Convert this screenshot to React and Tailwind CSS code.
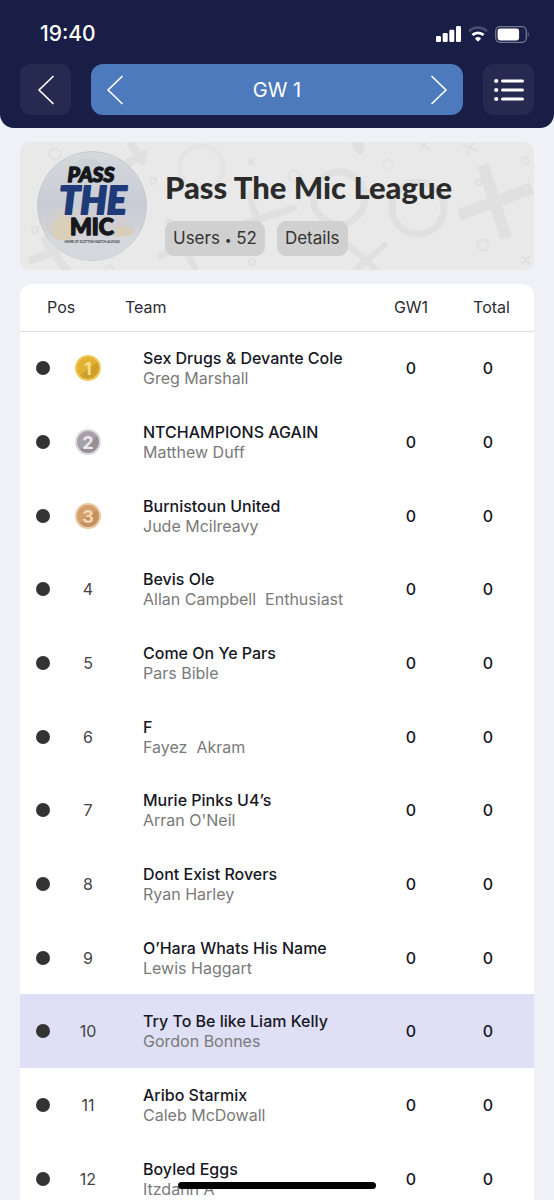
const teams = [
    { pos: 1, name: 'Sex Drugs & Devante Cole', manager: 'Greg Marshall', gw: 0, total: 0 },
    { pos: 2, name: 'NTCHAMPIONS AGAIN', manager: 'Matthew Duff', gw: 0, total: 0 },
    { pos: 3, name: 'Burnistoun United', manager: 'Jude Mcilreavy', gw: 0, total: 0 },
    { pos: 4, name: 'Bevis Ole', manager: 'Allan Campbell  Enthusiast', gw: 0, total: 0 },
    { pos: 5, name: 'Come On Ye Pars', manager: 'Pars Bible', gw: 0, total: 0 },
    { pos: 6, name: 'F', manager: 'Fayez  Akram', gw: 0, total: 0 },
    { pos: 7, name: 'Murie Pinks U4’s', manager: "Arran O'Neil", gw: 0, total: 0 },
    { pos: 8, name: 'Dont Exist Rovers', manager: 'Ryan Harley', gw: 0, total: 0 },
    { pos: 9, name: 'O’Hara Whats His Name', manager: 'Lewis Haggart', gw: 0, total: 0 },
    { pos: 10, name: 'Try To Be like Liam Kelly', manager: 'Gordon Bonnes', gw: 0, total: 0, mine: true },
    { pos: 11, name: 'Aribo Starmix', manager: 'Caleb McDowall', gw: 0, total: 0 },
    { pos: 12, name: 'Boyled Eggs', manager: 'Itzdann A', gw: 0, total: 0 },
];

const medals = {
    1: { rim: '#f0c860', face: '#e3b130', shade: '#cf9f2c', digit: '#f8dc8c' },
    2: { rim: '#dcd8df', face: '#a8a0a8', shade: '#989098', digit: '#ebe8ec' },
    3: { rim: '#ebc8a2', face: '#d3a06c', shade: '#c39262', digit: '#f5d9b5' },
};

const Medal = ({ pos }) => {
    const m = medals[pos];
    return (
        <svg viewBox="0 0 26 26" className="w-[26px] h-[26px]" role="img" aria-label={`Position ${pos}`}>
            <circle cx="13" cy="13" r="13" fill={m.rim} />
            <circle cx="13" cy="13" r="11" fill={m.face} />
            <path d="M22 6.7A11 11 0 0 1 5 20.5Z" fill={m.shade} />
            <text x="13" y="19.5" textAnchor="middle" fontSize="18" fontWeight="700" fill={m.digit}>{pos}</text>
        </svg>
    );
};

const Chevron = ({ flip }) => (
    <svg
        viewBox="0 0 18 30"
        className={`w-[18px] h-[30px] ${flip ? 'rotate-180' : ''}`}
        fill="none"
        stroke="currentColor"
        strokeWidth="1.7"
        strokeLinecap="round"
        strokeLinejoin="round"
    >
        <path d="M16 1.5 2 15l14 13.5" />
    </svg>
);

const StatusBar = () => (
    <div className="flex justify-between items-center h-16 pl-10 pr-6 pt-1">
        <span className="text-[21px] leading-6 font-medium">19:40</span>
        <div className="flex items-center gap-[7px]">
            <svg viewBox="0 0 25 16" className="w-[25px] h-4" fill="#fff">
                <rect x="0" y="10" width="5" height="6" rx="1.2" />
                <rect x="6.7" y="7" width="5" height="9" rx="1.2" />
                <rect x="13.3" y="3.8" width="5" height="12.2" rx="1.2" />
                <rect x="20" y="0" width="5" height="16" rx="1.2" />
            </svg>
            <svg viewBox="0 0 20 16" className="w-5 h-4" fill="none" strokeWidth="2.8">
                <path d="M1 5.2a13 13 0 0 1 18 0" stroke="#484d70" />
                <path d="M4.4 9.1a8 8 0 0 1 11.2 0" stroke="#fff" />
                <path d="M10 15.8 6.9 12.5a4.5 4.5 0 0 1 6.2 0Z" fill="#fff" />
            </svg>
            <svg viewBox="0 0 35 17" className="w-[35px] h-[17px]">
                <rect x="0.7" y="0.7" width="30.6" height="15.6" rx="4.2" fill="none" stroke="#74778f" strokeWidth="1.3" />
                <rect x="2.6" y="2.6" width="21.5" height="11.8" rx="2.4" fill="#fff" />
                <path d="M32.8 5.8q2 2.7 0 5.4Z" fill="#74778f" />
            </svg>
        </div>
    </div>
);

const Header = () => (
    <header className="shrink-0 bg-[#181e45] text-white rounded-b-[14px] pb-[13px]">
        <StatusBar />
        <nav className="flex gap-5 px-5">
            <button aria-label="Back" className="flex justify-center items-center w-[51px] h-[51px] rounded-[10px] bg-[#262a50]">
                <Chevron />
            </button>
            <div className="flex flex-1 justify-between items-center px-[15px] rounded-xl bg-[#4d7abc]">
                <button aria-label="Previous gameweek">
                    <Chevron />
                </button>
                <span className="text-xl leading-6">GW 1</span>
                <button aria-label="Next gameweek">
                    <Chevron flip />
                </button>
            </div>
            <button aria-label="Menu" className="flex justify-center items-center w-[51px] h-[51px] rounded-[10px] bg-[#262a50]">
                <svg viewBox="0 0 30 24" className="w-[30px] h-6" fill="#fff">
                    {[3, 12, 21].map((y) => (
                        <g key={y}>
                            <circle cx="2.2" cy={y} r="2.1" />
                            <rect x="7" y={y - 1.5} width="23" height="3" rx="1.5" />
                        </g>
                    ))}
                </svg>
            </button>
        </nav>
    </header>
);

const BannerPattern = () => (
    <svg
        viewBox="0 0 514 128"
        preserveAspectRatio="xMidYMid slice"
        className="absolute inset-0 w-full h-full"
        fill="none"
        stroke="#e0e0e0"
        strokeLinecap="round"
        aria-hidden="true"
    >
        {/* large rings and crosses */}
        <circle cx="181" cy="26" r="22" strokeWidth="5" stroke="#e4e4e4" />
        <circle cx="319" cy="56" r="26" strokeWidth="7" />
        <circle cx="398" cy="66" r="26" strokeWidth="7" />
        <g strokeLinecap="butt">
            <path d="M463 23 486 96M439 73 512 46" strokeWidth="12" />
        </g>
        <path d="M104 23 124 12M111 2l11 17M12 118l35-14M25 98l24 34" strokeWidth="8" />
        <path d="M149 80l26 46M140 114l50-28M229 52l13 40M224 82l50-16" strokeWidth="7" />
        <path d="M328 103l30 26M365 103l-31 26" strokeWidth="6" />
        <path d="M334-4l6 11" strokeWidth="10" />
        {/* small ones */}
        <g strokeWidth="2">
            <circle cx="35" cy="12" r="5.5" />
            <circle cx="133" cy="39" r="3" />
            <circle cx="15" cy="88" r="3" />
            <circle cx="89" cy="128" r="4" />
            <circle cx="232" cy="120" r="3" />
            <circle cx="274" cy="34" r="5.5" />
            <circle cx="368" cy="23" r="5" stroke="#e4e4e4" />
            <circle cx="505" cy="19" r="3.5" />
            <circle cx="459" cy="40" r="3" />
            <circle cx="463" cy="103" r="5.5" />
            <path d="M228 17l6 6M234 17l-6 6M399-1l10 9M408-2l-7 9M443 3l14 6M454-1l-7 13M503 115l6 6M509 115l-6 6" />
        </g>
    </svg>
);

const LeagueLogo = () => (
    <svg viewBox="0 0 110 110" className="w-[110px] h-[110px] shrink-0" role="img" aria-label="Pass The Mic">
        <defs>
            <linearGradient id="crest" x1="0" y1="0" x2="0" y2="1">
                <stop offset="0" stopColor="#d4d9dc" />
                <stop offset="0.5" stopColor="#c9ccd4" />
                <stop offset="1" stopColor="#dcdde0" />
            </linearGradient>
            <clipPath id="crest-clip">
                <circle cx="55" cy="55" r="54" />
            </clipPath>
        </defs>
        <circle cx="55" cy="55" r="54.5" fill="url(#crest)" stroke="#c2c6cb" strokeWidth="0.8" />
        <g clipPath="url(#crest-clip)">
            <path d="M33 16q18-18 34 0l4 20H32Z" fill="#cbd2d5" />
            <path d="M10 66q8-12 20-10l48 6q16 6 20 18l-14 6-40-6-26 8-10-10Z" fill="#d0ced0" />
            <path d="M14 76l12-14 14 16-4 10-18 2Z" fill="#dacfb9" />
            <path d="M80 76q12-2 18 6l-8 6-12-2Z" fill="#d8cdb6" />
            <path d="M0 84q40 14 110-4v32H0Z" fill="#d6d8dd" />
        </g>
        <g fontFamily="Lato, sans-serif" fontWeight="900" fontStyle="italic" textAnchor="middle" strokeLinejoin="round">
            <text x="54" y="31" fontSize="21" fill="#15171c" stroke="#15171c" strokeWidth="1.4">PASS</text>
            <text x="56" y="63" fontSize="37" fill="#1f3a78" stroke="#1f3a78" strokeWidth="2">THE</text>
            <text x="55" y="84" fontSize="23" fill="#15171c" stroke="#15171c" strokeWidth="1.4" fontStyle="normal">MIC</text>
            <text x="55" y="92" fontSize="3.3" fontWeight="700" fill="#3c3f48">HOME OF SCOTTISH WATCH-ALONGS</text>
        </g>
    </svg>
);

const LeagueBanner = () => (
    <section className="relative shrink-0 overflow-hidden rounded-[10px] bg-[#e9e9e9]">
        <BannerPattern />
        <div className="relative flex items-center gap-[18px] px-[17px] py-[9px]">
            <LeagueLogo />
            <div className="flex flex-col gap-4 pt-3">
                <h1 className="font-[Lato,sans-serif] font-black text-[31px] leading-9 text-[#2b2b2b]">Pass The Mic League</h1>
                <div className="flex gap-3 text-[17px] leading-[35px] text-[#333]">
                    <button className="px-2 rounded-[9px] bg-[#d0d0d0]">
                        Users <span className="text-xs">•</span> 52
                    </button>
                    <button className="px-2 rounded-[9px] bg-[#d0d0d0]">Details</button>
                </div>
            </div>
        </div>
    </section>
);

const TeamRow = ({ team }) => (
    <tr className={`h-[74px] nth-[3n]:h-[73px] ${team.mine ? 'bg-[#dfdff5]' : ''}`}>
        <td>
            <div className="flex items-center pl-4">
                <span className="shrink-0 w-[14px] h-[14px] rounded-full bg-[#333]" />
                <span className="shrink-0 flex justify-center w-[76px] text-[#444]">
                    {medals[team.pos] ? <Medal pos={team.pos} /> : team.pos}
                </span>
            </div>
        </td>
        <td className="pl-[18px] leading-5 whitespace-pre">
            <div className="font-medium">{team.name}</div>
            <div className="text-[#7a7a7a]">{team.manager}</div>
        </td>
        <td className="text-center font-medium">{team.gw}</td>
        <td className="text-center font-medium pr-[7px]">{team.total}</td>
    </tr>
);

const Standings = () => (
    <table className="w-full table-fixed rounded-t-xl bg-white text-base text-[#16171f]">
        <colgroup>
            <col className="w-[105px]" />
            <col />
            <col className="w-[76px]" />
            <col className="w-[85px]" />
        </colgroup>
        <thead>
            <tr className="h-[47px] border-b border-[#dcdce2] text-[#2b2b33]">
                <th className="pl-[27px] text-left font-normal">Pos</th>
                <th className="text-left font-normal">Team</th>
                <th className="text-center font-normal">GW1</th>
                <th className="text-center font-normal">Total</th>
            </tr>
        </thead>
        <tbody>
            {teams.map((team) => (
                <TeamRow key={team.pos} team={team} />
            ))}
        </tbody>
    </table>
);

const App = () => {
    return (
        <div className="flex flex-col h-screen overflow-hidden bg-[#f0f0f7] font-[Inter,sans-serif]">
            <Header />
            <main className="flex flex-col flex-1 gap-[14px] px-5 pt-[14px] overflow-y-auto [scrollbar-width:none]">
                <LeagueBanner />
                <Standings />
            </main>
            {/* Home indicator */}
            <div className="fixed bottom-[11px] inset-x-0 mx-auto w-[198px] h-[7px] rounded-full bg-black" />
        </div>
    );
};

export default App;
